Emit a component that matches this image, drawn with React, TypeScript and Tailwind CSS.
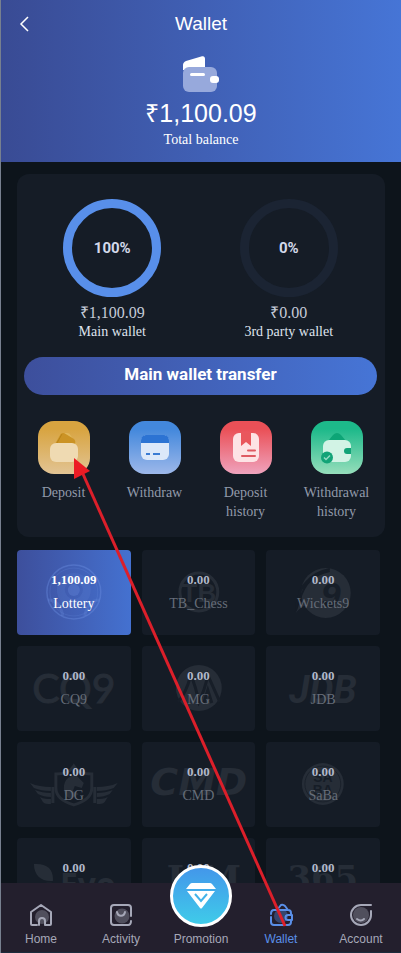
import type { ReactNode } from "react";

const serif = "font-['Liberation_Serif',serif]";
const sans = "font-['Liberation_Sans',sans-serif]";

function Ring({ percent, amount, label, color }: { percent: string; amount: string; label: string; color: string }) {
  return (
    <div className="flex flex-col items-center">
      <div className={`flex size-[98px] items-center justify-center rounded-full border-[9px] ${color}`}>
        <span className="font-['Roboto',sans-serif] text-[15px] font-bold text-[#d3d9ea]">{percent}</span>
      </div>
      <p className="mt-1.5 text-base leading-5 text-[#c6cbd8]">{amount}</p>
      <p className="text-sm leading-[18px] text-[#dfe3ee]">{label}</p>
    </div>
  );
}

function Action({ id, from, to, label, children }: { id: string; from: string; to: string; label: string; children: ReactNode }) {
  return (
    <button type="button" className="flex flex-col items-center">
      <svg width="52" height="53" viewBox="0 0 52 53" aria-hidden="true">
        <defs>
          <linearGradient id={id} x1="0" y1="0" x2="0" y2="1">
            <stop offset="0.15" stopColor={from} />
            <stop offset="1" stopColor={to} />
          </linearGradient>
        </defs>
        <rect width="52" height="53" rx="16" fill={`url(#${id})`} />
        {children}
      </svg>
      <span className="mt-[9px] w-20 text-sm leading-[19px] text-[#929aaa]">{label}</span>
    </button>
  );
}

const mark = "#262d37";

const logos: Record<string, ReactNode> = {
  Lottery: (
    <g fill="none" stroke="#6c8fe0" strokeOpacity="0.4">
      <circle cx="57" cy="42" r="27" strokeWidth="1.5" />
      <circle cx="57" cy="42" r="24" strokeWidth="1" strokeOpacity="0.2" />
      <circle cx="57" cy="40" r="13" strokeWidth="8" strokeOpacity="0.16" />
      <circle cx="57" cy="40" r="6" fill="#6c8fe0" fillOpacity="0.3" stroke="none" />
      <path d="M31 50c8 0 13 5 15 16M83 50c-8 0-13 5-15 16" strokeWidth="3" strokeOpacity="0.25" />
    </g>
  ),
  TB_Chess: (
    <g>
      <circle cx="57" cy="42" r="19" fill="none" stroke={mark} strokeWidth="3" />
      <text x="57" y="52" textAnchor="middle" fontSize="26" fontWeight="700" fill={mark} className={sans}>TB</text>
    </g>
  ),
  Wickets9: (
    <g>
      <circle cx="60" cy="43" r="25" fill={mark} />
      <path d="M30 62c1-24 13-39 34-43M34 50c4-16 14-26 30-29M33 43c6-13 15-19 27-22" fill="none" stroke="#151c26" strokeWidth="2" />
      <path d="M30 63c2-4 3-8 4-12l6 4c-4 2-7 4-10 8Z" fill={mark} />
      <text x="65" y="57" textAnchor="middle" fontSize="36" fontWeight="700" fontStyle="italic" fill="#171e28" className={sans}>9</text>
    </g>
  ),
  CQ9: (
    <text x="57" y="57" textAnchor="middle" fontSize="41" fill={mark} stroke={mark} className="font-['Lato',sans-serif]">CQ9</text>
  ),
  MG: (
    <g>
      <circle cx="57" cy="42" r="23" fill={mark} />
      <path d="M36 56c6-6 10-16 13-27 4 9 6 17 8 27 4-8 7-17 9-27 4 9 8 18 12 27M62 57l4-13 4 13" fill="none" stroke="#171e28" strokeWidth="3" />
    </g>
  ),
  JDB: (
    <text x="57" y="57" textAnchor="middle" fontSize="38" fontWeight="700" fontStyle="italic" fill={mark} className="font-['Roboto',sans-serif]">JDB</text>
  ),
  DG: (
    <g>
      <path d="M39 32c9 0 14-2 18-8 4 6 9 8 18 8v14c0 9-8 14-18 17-10-3-18-8-18-17Z" fill="none" stroke={mark} strokeWidth="3" />
      <path d="M13 41c7 3 13 4 21 4v4c-7 0-12-1-17-3ZM18 48c5 2 10 3 16 3v4c-5 0-9-1-13-3ZM23 55c4 2 7 2 11 2v5c-4 0-6 0-8-2ZM101 41c-7 3-13 4-21 4v4c7 0 12-1 17-3ZM96 48c-5 2-10 3-16 3v4c5 0 9-1 13-3ZM91 55c-4 2-7 2-11 2v5c4 0 6 0 8-2Z" fill={mark} />
      <path d="M36 45v16M78 45v16" stroke={mark} strokeWidth="3" />
      <path d="M47 46c0-8 5-12 12-13l8 8-2 5-7-2-2 5 6 3-8 5c-5-2-7-6-7-11Z" fill={mark} />
    </g>
  ),
  CMD: (
    <text x="57" y="53" textAnchor="middle" fontSize="38" fontWeight="700" fontStyle="italic" fill={mark} className="font-['DejaVu_Sans',sans-serif]">CMD</text>
  ),
  SaBa: (
    <g>
      <circle cx="57" cy="42" r="21" fill={mark} />
      <circle cx="57" cy="42" r="18" fill="none" stroke="#1a212b" />
      <text x="57" y="40" textAnchor="middle" fontSize="14" fontWeight="700" fill="#161d27" className={sans}>SA</text>
      <text x="57" y="53" textAnchor="middle" fontSize="14" fontWeight="700" fill="#161d27" className={sans}>BA</text>
    </g>
  ),
  Evo: (
    <g fill={mark}>
      <path d="M17 26c13-1 20 5 19 17-11 1-19-5-19-17ZM22 50c3-5 8-6 14-5-1 6-6 8-14 5Z" />
      <text x="71" y="58" textAnchor="middle" fontSize="32" fontWeight="700" className="font-['Open_Sans',sans-serif]">Evo</text>
    </g>
  ),
  KM: (
    <text x="62" y="54" textAnchor="middle" fontSize="38" fontWeight="700" fill={mark} className="font-['DejaVu_Serif',serif]">KM</text>
  ),
  "365": (
    <text x="57" y="52" textAnchor="middle" fontSize="34" fontWeight="700" fill={mark} className="font-['DejaVu_Serif',serif]">365</text>
  ),
};

const games = ["Lottery", "TB_Chess", "Wickets9", "CQ9", "MG", "JDB", "DG", "CMD", "SaBa", "Evo", "KM", "365"];

function Tile({ name }: { name: string }) {
  const active = name === "Lottery";
  return (
    <button
      type="button"
      className={`relative flex h-[85px] flex-col items-center overflow-hidden rounded pt-5 ${
        active ? "bg-linear-to-r from-[#3d4f9c] to-[#4471d0] text-white" : "bg-[#151c26]"
      }`}
    >
      <svg className="absolute inset-0 size-full" viewBox="0 0 114 85" aria-hidden="true">
        {logos[name]}
      </svg>
      <span className={`relative text-[13px] leading-5 font-bold ${active ? "" : "text-[#b1b8c9]"}`}>
        {active ? "1,100.09" : "0.00"}
      </span>
      <span className={`relative mt-1 text-sm leading-5 ${active ? "" : "text-[#666d79]"}`}>{name}</span>
    </button>
  );
}

function NavItem({ label, active, children }: { label: string; active?: boolean; children: ReactNode }) {
  return (
    <a href="#" className={`flex flex-1 flex-col items-center pt-5 ${active ? "text-[#5a8fe8]" : "text-[#a6a8b8]"}`}>
      <svg width="24" height="24" viewBox="0 0 24 24" fill="none" stroke="currentColor" strokeWidth="2" strokeLinecap="round" strokeLinejoin="round" aria-hidden="true">
        {children}
      </svg>
      <span className="mt-1 text-xs leading-4">{label}</span>
    </a>
  );
}

export default function App() {
  return (
    <div className={`relative flex h-screen flex-col overflow-hidden border-l border-[#77808f] bg-[#0d141b] ${serif}`}>
      <main className="min-h-0 flex-1 overflow-y-auto [scrollbar-width:none]">
        <header className={`bg-linear-to-r from-[#394b94] to-[#4675d6] pb-3.5 text-white ${sans}`}>
          <div className="grid h-12 grid-cols-[48px_1fr_48px] items-center">
            <button type="button" aria-label="Back" className="flex h-12 items-center pl-[18px]">
              <svg width="10" height="16" viewBox="0 0 10 16" fill="none" stroke="currentColor" strokeWidth="1.5" aria-hidden="true">
                <path d="M9 1 2 8l7 7" />
              </svg>
            </button>
            <h1 className="text-center text-[19px] leading-6">Wallet</h1>
          </div>
          <div className="flex flex-col items-center pt-2">
            <svg width="36" height="37" viewBox="0 0 36 37" aria-hidden="true">
              <path d="M0 14V9c0-2 1-3 3-4L19 .3c2-.5 3 .7 3 2.700V14Z" fill="#fff" />
              <rect y="11" width="34" height="25" rx="6" fill="#97a9dc" />
              <rect x="7" y="17" width="15" height="3" rx="1.500" fill="#fff" />
              <rect x="27" y="20" width="9" height="7" rx="3" fill="#fff" />
            </svg>
            <p className="mt-1 text-[25px] leading-8">₹1,100.09</p>
            <p className={`mt-0.5 text-sm leading-[17px] ${serif}`}>Total balance</p>
          </div>
        </header>

        <div className="px-4 pt-3">
          <section className="rounded-xl bg-[#151c26] pt-[25px] pb-4">
            <div className="mr-2 ml-[7px]">
              <div className="grid grid-cols-2">
                <Ring percent="100%" amount="₹1,100.09" label="Main wallet" color="border-[#588fea]" />
                <Ring percent="0%" amount="₹0.00" label="3rd party wallet" color="border-[#1b2433]" />
              </div>
              <button
                type="button"
                className="mt-4 h-[38px] w-full rounded-full bg-linear-to-r from-[#3d4f9c] to-[#4675d6] pb-0.5 font-['Roboto',sans-serif] text-[17px] font-bold text-white"
              >
                Main wallet transfer
              </button>
            </div>
            <div className="mr-[3px] ml-px mt-[26px] grid grid-cols-4 items-start">
              <Action id="deposit" from="#d8a440" to="#e2c494" label="Deposit">
                <path d="m17 23 5-9c1-2 2-2 4-2h3c2 0 3 1 4 3l6 8Z" fill="#e0b75c" />
                <path d="m17 23 5-9c1-2 2-2 4-2l10 6c1 1 2 3 1 5Z" fill="#cb9325" />
                <path d="m19 22 5-9" stroke="#b98319" />
                <rect x="12" y="22" width="28" height="19" rx="6" fill="#efdab2" />
              </Action>
              <Action id="withdraw" from="#4388dc" to="#9db8ea" label="Withdraw">
                <rect x="12" y="14" width="28" height="25" rx="6" fill="#dce8f9" />
                <path d="M12 22v-2c0-4 2-6 6-6h16c4 0 6 2 6 6v2Z" fill="#2c73d3" />
                <path d="M17 33h4m3 0h7" stroke="#3a7bd3" strokeWidth="2" />
              </Action>
              <Action id="deposit-history" from="#ea5057" to="#efa3bd" label="Deposit history">
                <rect x="13" y="12" width="26" height="29" rx="6" fill="#fde3e5" />
                <path d="M21 12h10v13l-5-4-5 4Z" fill="#e9575d" />
                <path d="M28 29.500h7M22 35h13" stroke="#df5a62" strokeWidth="2" strokeLinecap="round" />
              </Action>
              <Action id="withdrawal-history" from="#1db98a" to="#96debb" label="Withdrawal history">
                <path d="m17 20 5-6q4-4 8 0l5 6Z" fill="#0da576" />
                <rect x="12" y="19" width="28" height="22" rx="6" fill="#d2f3e5" />
                <path d="M40 27h-4a3 3 0 0 0 0 6h4Z" fill="#12a377" />
                <circle cx="16" cy="36.500" r="6" fill="#12a377" />
                <path d="m13 36.500 2 2 4-4" fill="none" stroke="#93dcc2" strokeWidth="1.500" />
              </Action>
            </div>
          </section>

          <section className="mt-[13px] mr-[5px] grid grid-cols-3 gap-[11px] pb-4">
            {games.map((name) => (
              <Tile key={name} name={name} />
            ))}
          </section>
        </div>
      </main>

      <nav className={`relative flex h-[70px] shrink-0 border-b border-[#1c2b3c] bg-[#231f2d] ${sans}`}>
        <NavItem label="Home">
          <circle cx="13" cy="14" r="7" fill="currentColor" fillOpacity="0.35" stroke="none" />
          <path d="M8 22H3a1 1 0 0 1-1-1V9l10-7 10 7v12a1 1 0 0 1-1 1h-5v-4a3 3 0 0 0-6 0v4" />
        </NavItem>
        <NavItem label="Activity">
          <circle cx="13" cy="13" r="7.500" fill="currentColor" fillOpacity="0.35" stroke="none" />
          <path d="M22 13V5a3 3 0 0 0-3-3H5a3 3 0 0 0-3 3v14a3 3 0 0 0 3 3h14q3 0 3-4M8 9c1 5 7 5 8 0" />
        </NavItem>
        <a href="#" className="flex flex-1 flex-col items-center text-[#a6a8b8]">
          <span className="-mt-[18px] flex size-[62px] shrink-0 items-center justify-center rounded-full border-[3px] border-white bg-linear-to-b from-[#4397ea] to-[#3fcbe9]">
            <svg width="30" height="26" viewBox="0 0 30 26" aria-hidden="true">
              <path d="M6 0h18q1 0 2 1l4 5H0l4-5q1-1 2-1ZM1 8h28L16 25q-1 1-2 0Z" fill="#fff" />
              <path d="m9 11 6 7 6-7" fill="none" stroke="#42b3e9" strokeWidth="2" />
            </svg>
          </span>
          <span className="mt-1 text-xs leading-4">Promotion</span>
        </a>
        <NavItem label="Wallet" active>
          <circle cx="12" cy="13" r="7" fill="currentColor" fillOpacity="0.35" stroke="none" />
          <path d="M2 14v5q0 3 3 3h14q3 0 3-3v-1M2 11q0-4 3-4h14q3 0 3 3v1M8 7l4-5q2-1 4 1l3 4M23 12h-4a2.500 2.500 0 0 0 0 5h4Z" />
        </NavItem>
        <NavItem label="Account">
          <circle cx="12" cy="12" r="8" fill="currentColor" fillOpacity="0.35" stroke="none" />
          <path d="M22 2H12A10 10 0 1 0 22 12V8M8 16q4 3 7 0" />
        </NavItem>
      </nav>

      <svg className="pointer-events-none absolute top-[458px] left-[73px]" width="214" height="470" viewBox="0 0 214 470" aria-hidden="true">
        <path d="m9 16 202 452" stroke="#dc1f2a" strokeWidth="3" />
        <path d="M0 0v21l16-8Z" fill="#ec1b24" />
      </svg>
    </div>
  );
}
